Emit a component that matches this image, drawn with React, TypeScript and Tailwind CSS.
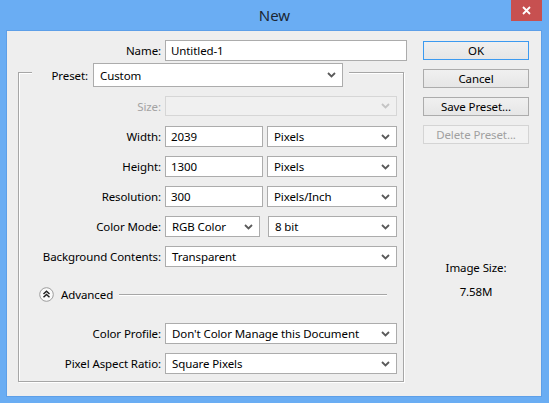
import React from "react";

function Chevron({ disabled }: { disabled?: boolean }) {
  return (
    <svg width="9" height="6" viewBox="0 0 9 6" className="shrink-0">
      <polyline
        points="1,1 4.5,4.5 8,1"
        fill="none"
        stroke={disabled ? "#c4c4c4" : "#5a5a5a"}
        strokeWidth="1.8"
      />
    </svg>
  );
}

function Select({ value, w, disabled, h = "h-[21px]" }: { value: string; w: string; disabled?: boolean; h?: string }) {
  return (
    <div
      className={`${w} ${h} flex items-center justify-between pl-[6px] pr-[6px] border ${
        disabled ? "border-[#d6d6d6] bg-[#f0f0f0]" : "border-[#acacac] bg-white"
      } text-black shrink-0`}
    >
      <span className="whitespace-nowrap leading-[12px] pt-[1px]">{value}</span>
      <Chevron disabled={disabled} />
    </div>
  );
}

function Input({ value, w }: { value: string; w: string }) {
  return (
    <div className={`${w} h-[21px] flex items-center pl-[5px] border border-[#acacac] bg-white text-black shrink-0`}>
      <span className="whitespace-nowrap leading-[12px] pt-[1px]">{value}</span>
    </div>
  );
}

function Row({ label, children, disabled, mt = "mt-[9px]", h = "h-[21px]" }: { label: string; children: React.ReactNode; disabled?: boolean; mt?: string; h?: string }) {
  return (
    <div className={`flex items-center gap-[4px] ${mt} ${h}`}>
      <div className={`w-[142px] text-right whitespace-nowrap leading-[12px] pt-[1px] ${disabled ? "text-[#a3a3a3]" : "text-black"}`}>
        {label}
      </div>
      {children}
    </div>
  );
}

function Button({ label, primary, disabled }: { label: string; primary?: boolean; disabled?: boolean }) {
  return (
    <div
      className={`w-[106px] h-[19px] flex items-center justify-center border ${
        primary
          ? "border-[#3c9af0] bg-gradient-to-b from-[#f0f0f0] to-[#e6e6e6] text-black"
          : disabled
          ? "border-[#d4d4d4] bg-[#f2f2f2] text-[#a0a0a0]"
          : "border-[#acacac] bg-gradient-to-b from-[#f0f0f0] to-[#e6e6e6] text-black"
      }`}
    >
      <span className="leading-[12px] pt-[1px]">{label}</span>
    </div>
  );
}

export default function App() {
  return (
    <div className="w-[549px] h-[403px] bg-[#6aadf3] flex flex-col font-['Noto_Sans',sans-serif] text-[11.5px] tracking-[-0.1px] overflow-hidden">
      <div className="relative h-[30px] flex items-center justify-center shrink-0">
        <span className="text-[15px] tracking-normal text-[#1b2633] leading-none">New</span>
        <div className="absolute right-[7px] top-0 w-[31px] h-[21px] bg-[#c75050] flex items-center justify-center">
          <svg width="9" height="9" viewBox="0 0 9 9">
            <path d="M1 1 L8 8 M8 1 L1 8" stroke="#fff" strokeWidth="1.8" />
          </svg>
        </div>
      </div>
      <div className="ml-[6px] w-[536px] h-[367px] bg-[#eeeeee] border border-[#5d9fe8] flex shrink-0">
        <div className="w-[416px] pl-[11px] flex flex-col">
          <div className="flex items-center gap-[4px] mt-[9px] h-[20px]">
            <div className="w-[143px] text-right text-black leading-[12px] pt-[1px]">Name:</div>
            <Input value="Untitled-1" w="w-[242px] h-[20px]" />
          </div>
          <div className="mt-[12px] w-[386px] h-[310px] border border-[#a6a6a6] shadow-[1px_1px_0_#ffffff,inset_1px_1px_0_#ffffff] flex flex-col">
            <div className="-mt-[10px] ml-[13px] self-start bg-[#eeeeee] pl-[4px] pr-[6px] flex items-center gap-[5px] h-[24px]">
              <div className="w-[52px] text-right text-black leading-[12px] pt-[1px]">Preset:</div>
              <Select value="Custom" w="w-[250px]" h="h-[24px]" />
            </div>
            <Row label="Size:" disabled mt="mt-[9px]" h="h-[20px]">
              <Select value="" w="w-[232px]" h="h-[20px]" disabled />
            </Row>
            <Row label="Width:" mt="mt-[10px]">
              <Input value="2039" w="w-[98px]" />
              <Select value="Pixels" w="w-[130px]" />
            </Row>
            <Row label="Height:">
              <Input value="1300" w="w-[98px]" />
              <Select value="Pixels" w="w-[130px]" />
            </Row>
            <Row label="Resolution:">
              <Input value="300" w="w-[98px]" />
              <Select value="Pixels/Inch" w="w-[130px]" />
            </Row>
            <Row label="Color Mode:">
              <div className="flex gap-[8px]">
                <Select value="RGB Color" w="w-[95px]" />
                <Select value="8 bit" w="w-[129px]" />
              </div>
            </Row>
            <Row label="Background Contents:">
              <Select value="Transparent" w="w-[232px]" />
            </Row>
            <div className="mt-[20px] h-[15px] flex items-center ml-[20px] mr-[16px]">
              <svg width="15" height="15" viewBox="0 0 15 15" className="shrink-0">
                <circle cx="7.5" cy="7.5" r="6.8" fill="#fafafa" stroke="#9c9c9c" strokeWidth="1" />
                <polyline points="4.5,7 7.5,4.3 10.5,7" fill="none" stroke="#222" strokeWidth="1.5" />
                <polyline points="4.5,10.2 7.5,7.5 10.5,10.2" fill="none" stroke="#222" strokeWidth="1.5" />
              </svg>
              <span className="ml-[7px] text-black leading-[12px] pt-[1px]">Advanced</span>
              <div className="ml-[6px] flex-1 h-[1px] bg-[#a6a6a6] shadow-[0_1px_0_#ffffff]" />
            </div>
            <Row label="Color Profile:" mt="mt-[21px]">
              <Select value="Don't Color Manage this Document" w="w-[232px]" />
            </Row>
            <Row label="Pixel Aspect Ratio:">
              <Select value="Square Pixels" w="w-[232px]" />
            </Row>
          </div>
        </div>
        <div className="w-[106px] flex flex-col items-center">
          <div className="mt-[10px] flex flex-col gap-[9px]">
            <Button label="OK" primary />
            <Button label="Cancel" />
            <Button label="Save Preset..." />
            <Button label="Delete Preset..." disabled />
          </div>
          <div className="mt-[116px] h-[16px] leading-[16px] text-black">Image Size:</div>
          <div className="mt-[8px] h-[16px] leading-[16px] text-black">7.58M</div>
        </div>
      </div>
    </div>
  );
}
